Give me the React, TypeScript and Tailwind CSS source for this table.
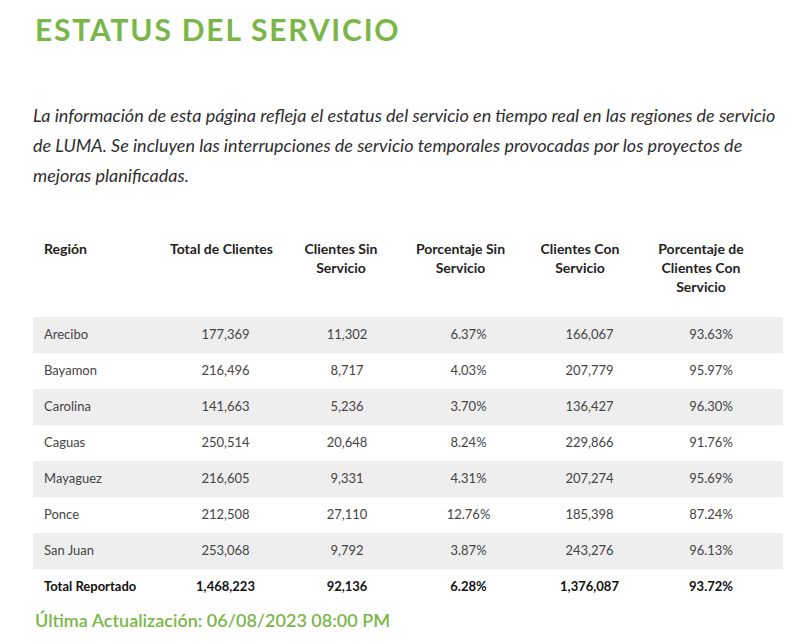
import React from 'react'

type Fila = {
  region: string
  total: string
  sin: string
  pctSin: string
  con: string
  pctCon: string
}

const filas: Fila[] = [
  { region: 'Arecibo', total: '177,369', sin: '11,302', pctSin: '6.37%', con: '166,067', pctCon: '93.63%' },
  { region: 'Bayamon', total: '216,496', sin: '8,717', pctSin: '4.03%', con: '207,779', pctCon: '95.97%' },
  { region: 'Carolina', total: '141,663', sin: '5,236', pctSin: '3.70%', con: '136,427', pctCon: '96.30%' },
  { region: 'Caguas', total: '250,514', sin: '20,648', pctSin: '8.24%', con: '229,866', pctCon: '91.76%' },
  { region: 'Mayaguez', total: '216,605', sin: '9,331', pctSin: '4.31%', con: '207,274', pctCon: '95.69%' },
  { region: 'Ponce', total: '212,508', sin: '27,110', pctSin: '12.76%', con: '185,398', pctCon: '87.24%' },
  { region: 'San Juan', total: '253,068', sin: '9,792', pctSin: '3.87%', con: '243,276', pctCon: '96.13%' },
]

const cols = 'grid grid-cols-[132px_121px_122px_121px_121px_122px] items-center'

export default function App() {
  return (
    <div className="w-[800px] h-[644px] bg-white font-['Lato',sans-serif] text-[#333] overflow-hidden">
      <h1 className="pl-[35px] pt-[12px] text-[30px] leading-[34px] font-bold tracking-[0.06em] text-[#7ab648]">
        ESTATUS DEL SERVICIO
      </h1>

      <p className="ml-[33px] mt-[54px] w-[748px] text-[18px] leading-[30px] italic text-[#2e2e2e]">
        La información de esta página refleja el estatus del servicio en tiempo real en las regiones de servicio de
        LUMA. Se incluyen las interrupciones de servicio temporales provocadas por los proyectos de mejoras
        planificadas.
      </p>

      <div className="ml-[33px] mt-[49px] w-[750px]">
        {/* encabezado */}
        <div className="grid grid-cols-[129px_119px_120px_119px_120px_122px] items-start h-[78px] text-[14px] leading-[19px] font-bold text-[#222]">
          <div className="pl-[11px]">Región</div>
          <div className="text-center">Total de Clientes</div>
          <div className="text-center px-[20px]">Clientes Sin Servicio</div>
          <div className="text-center px-[8px]">Porcentaje Sin Servicio</div>
          <div className="text-center px-[18px]">Clientes Con Servicio</div>
          <div className="text-center px-[10px]">Porcentaje de Clientes Con Servicio</div>
        </div>

        {filas.map((f, i) => (
          <div
            key={f.region}
            className={`${cols} h-[36px] text-[13px] text-[#444] ${i % 2 === 0 ? 'bg-[#eeeeee]' : 'bg-white'}`}
          >
            <div className="pl-[11px]">{f.region}</div>
            <div className="text-center">{f.total}</div>
            <div className="text-center">{f.sin}</div>
            <div className="text-center">{f.pctSin}</div>
            <div className="text-center">{f.con}</div>
            <div className="text-center">{f.pctCon}</div>
          </div>
        ))}

        <div className={`${cols} h-[36px] text-[13px] font-bold text-[#111]`}>
          <div className="pl-[11px]">Total Reportado</div>
          <div className="text-center">1,468,223</div>
          <div className="text-center">92,136</div>
          <div className="text-center">6.28%</div>
          <div className="text-center">1,376,087</div>
          <div className="text-center">93.72%</div>
        </div>
      </div>

      <p className="pl-[35px] mt-[2px] text-[18px] leading-[26px] font-semibold text-[#7ab648]">
        Última Actualización: 06/08/2023 08:00 PM
      </p>
    </div>
  )
}
